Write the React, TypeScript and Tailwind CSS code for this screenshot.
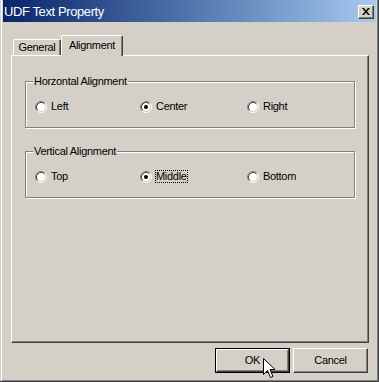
import React from 'react';

const font = { fontFamily: '"Liberation Sans", Arial, sans-serif' };

function Radio({ checked }: { checked?: boolean }) {
  return (
    <svg width="12" height="12" viewBox="0 0 12 12" className="shrink-0">
      <circle cx="6" cy="6" r="4.5" fill="#fff" />
      <path d="M2.11 9.89 A5.5 5.5 0 0 1 9.89 2.11" stroke="#808080" strokeWidth="1" fill="none" />
      <path d="M9.89 2.11 A5.5 5.5 0 0 1 2.11 9.89" stroke="#fff" strokeWidth="1" fill="none" />
      <path d="M2.82 9.18 A4.5 4.5 0 0 1 9.18 2.82" stroke="#404040" strokeWidth="1" fill="none" />
      <path d="M9.18 2.82 A4.5 4.5 0 0 1 2.82 9.18" stroke="#d4d0c8" strokeWidth="1" fill="none" />
      {checked && <circle cx="6" cy="6" r="2" fill="#000" />}
    </svg>
  );
}

function Option({ label, checked, focused }: { label: string; checked?: boolean; focused?: boolean }) {
  return (
    <div className="flex items-center gap-[4px]">
      <Radio checked={checked} />
      {focused ? (
        <span className="-ml-px border border-dotted border-black px-0 leading-[11px]">{label}</span>
      ) : (
        <span className="leading-[13px]">{label}</span>
      )}
    </div>
  );
}

function Group({ title, options }: { title: string; options: { label: string; checked?: boolean; focused?: boolean }[] }) {
  return (
    <div className="relative h-[47px] border border-[#808080] shadow-[inset_1px_1px_0_#fff,1px_1px_0_#fff]">
      <span className="absolute -top-[7px] left-[7px] bg-[#d4d0c8] px-px leading-[13px]">{title}</span>
      <div className="grid grid-cols-[105px_107px_1fr] pl-[9px] pt-[18px]">
        {options.map((o) => (
          <Option key={o.label} {...o} />
        ))}
      </div>
    </div>
  );
}

export default function App() {
  return (
    <div
      className="w-[379px] h-[382px] bg-[#d4d0c8] pl-px border-r border-b border-[#404040] text-[11px] tracking-[-0.3px] text-black overflow-hidden relative"
      style={font}
    >
      <div className="h-full flex flex-col border-l border-white border-r border-b border-r-[#808080] border-b-[#808080] pl-px pr-px">
        {/* Title bar */}
        <div className="h-[22px] shrink-0 flex items-center justify-between bg-gradient-to-r from-[#0a246a] to-[#a6caf0] pl-px pr-[2px]">
          <span className="text-white text-[13px] tracking-[-0.4px] leading-none">UDF Text Property</span>
          <button className="mt-px w-[16px] h-[14px] flex items-center justify-center bg-[#d4d0c8] border border-t-white border-l-white border-r-[#404040] border-b-[#404040] shadow-[inset_-1px_-1px_0_#808080]">
            <svg width="8" height="7" viewBox="0 0 8 7">
              <path d="M0 0 L2 0 L4 2.5 L6 0 L8 0 L5 3.5 L8 7 L6 7 L4 4.5 L2 7 L0 7 L3 3.5 Z" fill="#000" />
            </svg>
          </button>
        </div>

        {/* Tabs */}
        <div className="mt-[13px] ml-[8px] mr-[7px] h-[21px] -mb-px flex items-end pl-[2px] relative z-10">
          <div className="mb-px h-[16px] w-[48px] flex items-center justify-center bg-[#d4d0c8] border-t border-l border-white rounded-tl-[2px] border-r border-r-[#404040] shadow-[inset_-1px_0_0_#808080] rounded-tr-[2px] leading-none pb-px">
            General
          </div>
          <div className="h-[21px] w-[62px] flex items-start justify-center pt-[4px] bg-[#d4d0c8] border-t border-l border-white rounded-tl-[2px] border-r border-r-[#404040] shadow-[inset_-1px_0_0_#808080] rounded-tr-[2px] leading-none">
            Alignment
          </div>
        </div>

        {/* Panel */}
        <div className="ml-[8px] mr-[7px] h-[288px] shrink-0 border border-t-white border-l-white border-r-[#404040] border-b-[#404040] shadow-[inset_-1px_-1px_0_#808080] px-[13px] pt-[25px] flex flex-col gap-[23px]">
          <Group
            title="Horzontal Alignment"
            options={[{ label: 'Left' }, { label: 'Center', checked: true }, { label: 'Right' }]}
          />
          <Group
            title="Vertical Alignment"
            options={[{ label: 'Top' }, { label: 'Middle', checked: true, focused: true }, { label: 'Bottom' }]}
          />
        </div>

        {/* Buttons */}
        <div className="mt-[5px] mr-[8px] flex justify-end gap-[3px]">
          <button className="w-[75px] h-[25px] border border-black p-0">
            <div className="h-full w-full flex items-center justify-center border border-t-white border-l-white border-r-[#404040] border-b-[#404040] shadow-[inset_-1px_-1px_0_#808080] leading-none">
              OK
            </div>
          </button>
          <button className="w-[75px] h-[25px] flex items-center justify-center border border-t-white border-l-white border-r-[#404040] border-b-[#404040] shadow-[inset_-1px_-1px_0_#808080] leading-none">
            Cancel
          </button>
        </div>
      </div>

      {/* Mouse cursor */}
      <svg className="absolute left-[263px] top-[358px]" width="13" height="22" viewBox="0 0 13 22">
        <path d="M0.5 0.5 L0.5 16.5 L4.5 12.5 L7.5 19.5 L10 18.5 L7 11.5 L12 11.5 Z" fill="#fff" stroke="#000" strokeWidth="1" />
      </svg>
    </div>
  );
}
